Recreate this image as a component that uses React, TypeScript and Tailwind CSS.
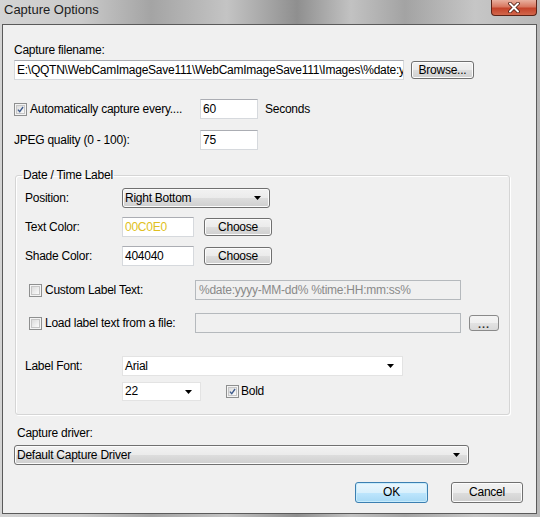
import React from 'react';

const font = { fontFamily: '"Liberation Sans", Arial, sans-serif' };

const Check = ({ checked }: { checked?: boolean }) => (
  <div className="w-[13px] h-[13px] shrink-0 border border-[#8e8f8f] bg-[#f4f4f4] p-[1px]">
    <div className="w-full h-full border border-[#c6c6c6] bg-[linear-gradient(135deg,#dcdcdc,#fbfbfb)] flex items-center justify-center">
      {checked && (
        <svg width="9" height="9" viewBox="0 0 9 9">
          <path d="M1.2 4.6 L3.5 7.2 L7.8 1.3" fill="none" stroke="#3d5a8c" strokeWidth="1.7" />
        </svg>
      )}
    </div>
  </div>
);

const Arrow = () => (
  <svg width="7" height="4" viewBox="0 0 7 4" className="shrink-0">
    <path d="M0 0 H7 L3.5 4 Z" fill="#000" />
  </svg>
);

const Field = ({ value, className, textClass }: { value?: string; className: string; textClass?: string }) => (
  <div
    className={`flex items-center pl-[2px] bg-white border border-[#d6d9dd] border-t-[#abadb3] overflow-hidden whitespace-nowrap leading-[15px] ${className}`}
  >
    <span className={textClass ?? 'text-black'}>{value}</span>
  </div>
);

const Button = ({ label, className }: { label: string; className: string }) => (
  <div
    className={`flex items-center justify-center rounded-[3px] border border-[#707070] bg-[linear-gradient(180deg,#f2f2f2_0%,#ebebeb_50%,#dddddd_51%,#cfcfcf_100%)] shadow-[inset_0_0_0_1px_#fcfcfc] leading-[15px] ${className}`}
  >
    {label}
  </div>
);

const DropList = ({ value, className }: { value: string; className: string }) => (
  <div
    className={`flex items-center justify-between pl-[2px] pr-[8px] rounded-[3px] border border-[#707070] bg-[linear-gradient(180deg,#f2f2f2_0%,#ebebeb_50%,#dddddd_51%,#cfcfcf_100%)] shadow-[inset_0_0_0_1px_#fcfcfc] leading-[15px] ${className}`}
  >
    <span>{value}</span>
    <Arrow />
  </div>
);

const EditCombo = ({ value, className }: { value: string; className: string }) => (
  <div
    className={`flex items-center justify-between pl-[2px] pr-[8px] bg-white border border-[#e3e3e3] leading-[15px] ${className}`}
  >
    <span>{value}</span>
    <Arrow />
  </div>
);

export default function App() {
  return (
    <div
      style={font}
      className="w-[540px] h-[517px] overflow-hidden text-[12px] tracking-[-0.25px] text-black bg-[linear-gradient(90deg,#d4d4d4_0%,#cacaca_15%,#a4a4a4_28%,#c4c4c4_42%,#8f8f8f_55%,#c2c2c2_65%,#a3a3a3_75%,#c6c6c6_88%,#b8b8b8_100%)]"
    >
      {/* title bar */}
      <div className="h-[24px] flex items-start justify-between">
        <div className="pl-[4px] pt-[2px] text-[13px] tracking-normal leading-[16px] text-[#1c1c1c]">Capture Options</div>
        <div className="mr-[3px] w-[46px] h-[16px] rounded-b-[4px] border border-t-0 border-[#5c2317] bg-[linear-gradient(180deg,#e9b09f_0%,#d87760_45%,#c4432a_55%,#d2674c_100%)] flex items-center justify-center">
          <svg width="14" height="11" viewBox="0 0 14 11">
            <path d="M3 1.5 L11 9.5 M11 1.5 L3 9.5" stroke="#4a1a10" strokeWidth="3.6" strokeLinecap="round" />
            <path d="M3 1.5 L11 9.5 M11 1.5 L3 9.5" stroke="#fff" strokeWidth="2" strokeLinecap="round" />
          </svg>
        </div>
      </div>

      {/* client area */}
      <div className="ml-[2px] w-[535px] h-[490px] border border-[#5a5a5a] bg-[#f0f0f0] flex flex-col pl-[11px] pt-[18px]">
        <div className="leading-[15px]">Capture filename:</div>

        <div className="mt-[2px] h-[20px] flex items-center">
          <Field
            value="E:\QQTN\WebCamImageSave111\WebCamImageSave111\Images\%date:yyyy"
            className="w-[390px] h-[20px] border-[#8da2bb] border-t-[#7b93ae]"
          />
          <Button label="Browse..." className="ml-[7px] w-[63px] h-[18px]" />
        </div>

        <div className="mt-[19px] h-[20px] flex items-center">
          <div className="w-[186px] flex items-center">
            <Check checked />
            <span className="ml-[3px] leading-[15px]">Automatically capture every....</span>
          </div>
          <Field value="60" className="w-[58px] h-[20px]" />
          <span className="ml-[7px] leading-[15px]">Seconds</span>
        </div>

        <div className="mt-[11px] h-[20px] flex items-center">
          <div className="w-[186px] leading-[15px]">JPEG quality (0 - 100):</div>
          <Field value="75" className="w-[58px] h-[20px]" />
        </div>

        <fieldset className="mt-[17px] ml-[1px] w-[495px] rounded-[3px] border border-[#d5d5d5] shadow-[inset_1px_1px_0_#ffffff,1px_1px_0_#ffffff] pl-[9px] pt-[5px] pb-[13px] flex flex-col">
          <legend className="-ml-[3px] px-[1px] leading-[16px]">Date / Time Label</legend>

          <div className="h-[20px] flex items-center">
            <div className="w-[97px] leading-[15px]">Position:</div>
            <DropList value="Right Bottom" className="w-[148px] h-[20px]" />
          </div>

          <div className="mt-[9px] h-[20px] flex items-center">
            <div className="w-[97px] leading-[15px]">Text Color:</div>
            <Field value="00C0E0" className="w-[72px] h-[20px]" textClass="text-[#e0bf22]" />
            <Button label="Choose" className="ml-[10px] w-[68px] h-[18px]" />
          </div>

          <div className="mt-[9px] h-[20px] flex items-center">
            <div className="w-[97px] leading-[15px]">Shade Color:</div>
            <Field value="404040" className="w-[72px] h-[20px]" />
            <Button label="Choose" className="ml-[10px] w-[68px] h-[18px]" />
          </div>

          <div className="mt-[14px] h-[20px] flex items-center">
            <div className="w-[170px] flex items-center pl-[4px]">
              <Check />
              <span className="ml-[3px] leading-[15px]">Custom Label Text:</span>
            </div>
            <div className="w-[266px] h-[20px] flex items-center pl-[3px] border border-[#b5b9bd] bg-[#f0f0f0] text-[#8a8a8a] leading-[15px] whitespace-nowrap overflow-hidden">
              %date:yyyy-MM-dd% %time:HH:mm:ss%
            </div>
          </div>

          <div className="mt-[13px] h-[20px] flex items-center">
            <div className="w-[170px] flex items-center pl-[4px]">
              <Check />
              <span className="ml-[3px] leading-[15px]">Load label text from a file:</span>
            </div>
            <div className="w-[266px] h-[20px] border border-[#b5b9bd] bg-[#f0f0f0]" />
            <div className="ml-[8px] w-[30px] h-[16px] rounded-[3px] border border-[#8a8a8a] bg-[linear-gradient(180deg,#f4f4f4_0%,#efefef_50%,#e2e2e2_51%,#d9d9d9_100%)] flex items-end justify-center text-[#333] text-[11px] font-bold leading-[12px] tracking-[1px]">
              ...
            </div>
          </div>

          <div className="mt-[23px] h-[20px] flex items-center">
            <div className="w-[97px] leading-[15px]">Label Font:</div>
            <EditCombo value="Arial" className="w-[281px] h-[20px]" />
          </div>

          <div className="mt-[6px] h-[19px] flex items-center">
            <div className="w-[97px]" />
            <EditCombo value="22" className="w-[79px] h-[19px]" />
            <div className="ml-[25px] flex items-center">
              <Check checked />
              <span className="ml-[2px] leading-[15px]">Bold</span>
            </div>
          </div>
        </fieldset>

        <div className="mt-[11px] ml-[3px] leading-[15px]">Capture driver:</div>
        <DropList value="Default Capture Driver" className="mt-[4px] w-[455px] h-[20px]" />

        <div className="mt-[17px] mr-[13px] flex justify-end gap-[23px]">
          <div className="w-[73px] h-[21px] rounded-[3px] border border-[#3c7fb1] bg-[linear-gradient(180deg,#eaf6fd_0%,#d9f0fc_50%,#bee6fd_51%,#a7d9f5_100%)] shadow-[inset_0_0_0_1px_#c8ecfc] flex items-center justify-center leading-[15px]">
            OK
          </div>
          <Button label="Cancel" className="w-[72px] h-[21px]" />
        </div>
      </div>
    </div>
  );
}
